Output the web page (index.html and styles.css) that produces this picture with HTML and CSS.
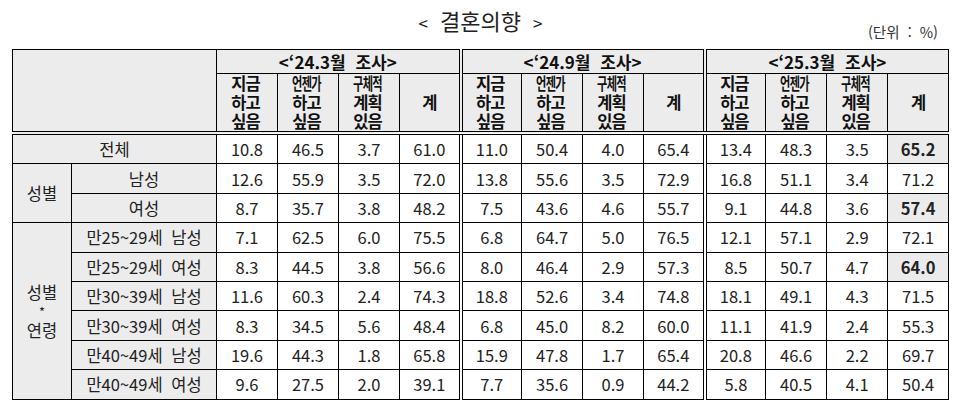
FILE: index.html
```html
<!DOCTYPE html>
<html lang="ko">
<head>
<meta charset="utf-8">
<title>결혼의향</title>
<link rel="stylesheet" href="styles.css">
</head>
<body>
<div class="page">
  <div class="head">
    <div class="title"><span class="br">&lt;</span>결혼의향<span class="br">&gt;</span></div>
    <div class="unit">(단위 <span class="colon">:</span> %)</div>
  </div>
  <table class="tbl">
    <colgroup>
      <col class="c1"><col class="c2">
      <col class="cd"><col class="cd"><col class="cd"><col class="cd">
      <col class="cd"><col class="cd"><col class="cd"><col class="cd">
      <col class="cd"><col class="cd"><col class="cd"><col class="cd">
    </colgroup>
    <thead>
      <tr class="r1">
        <th class="corner" rowspan="2" colspan="2"></th>
        <th class="grp" colspan="4">&lt;‘24.3월 조사&gt;</th>
        <th class="grp sep" colspan="4">&lt;‘24.9월 조사&gt;</th>
        <th class="grp sep" colspan="4">&lt;‘25.3월 조사&gt;</th>
      </tr>
      <tr class="r2">
        <th class="sub"><span class="ln">지금</span><span class="ln">하고</span><span class="ln">싶음</span></th>
        <th class="sub"><span class="ln sq">언젠가</span><span class="ln">하고</span><span class="ln">싶음</span></th>
        <th class="sub"><span class="ln sq">구체적</span><span class="ln">계획</span><span class="ln">있음</span></th>
        <th class="sub">계</th>
        <th class="sub sep"><span class="ln">지금</span><span class="ln">하고</span><span class="ln">싶음</span></th>
        <th class="sub"><span class="ln sq">언젠가</span><span class="ln">하고</span><span class="ln">싶음</span></th>
        <th class="sub"><span class="ln sq">구체적</span><span class="ln">계획</span><span class="ln">있음</span></th>
        <th class="sub">계</th>
        <th class="sub sep"><span class="ln">지금</span><span class="ln">하고</span><span class="ln">싶음</span></th>
        <th class="sub"><span class="ln sq">언젠가</span><span class="ln">하고</span><span class="ln">싶음</span></th>
        <th class="sub"><span class="ln sq">구체적</span><span class="ln">계획</span><span class="ln">있음</span></th>
        <th class="sub">계</th>
      </tr>
    </thead>
    <tbody>
      <tr>
        <td class="lab" colspan="2">전체</td>
        <td>10.8</td><td>46.5</td><td>3.7</td><td>61.0</td>
        <td class="sep">11.0</td><td>50.4</td><td>4.0</td><td>65.4</td>
        <td class="sep">13.4</td><td>48.3</td><td>3.5</td><td class="hl">65.2</td>
      </tr>
      <tr>
        <td class="lab" rowspan="2">성별</td>
        <td class="lab">남성</td>
        <td>12.6</td><td>55.9</td><td>3.5</td><td>72.0</td>
        <td class="sep">13.8</td><td>55.6</td><td>3.5</td><td>72.9</td>
        <td class="sep">16.8</td><td>51.1</td><td>3.4</td><td>71.2</td>
      </tr>
      <tr>
        <td class="lab">여성</td>
        <td>8.7</td><td>35.7</td><td>3.8</td><td>48.2</td>
        <td class="sep">7.5</td><td>43.6</td><td>4.6</td><td>55.7</td>
        <td class="sep">9.1</td><td>44.8</td><td>3.6</td><td class="hl">57.4</td>
      </tr>
      <tr>
        <td class="lab" rowspan="6"><span class="blk">성별</span><span class="blk star">*</span><span class="blk">연령</span></td>
        <td class="lab age">만25~29세 남성</td>
        <td>7.1</td><td>62.5</td><td>6.0</td><td>75.5</td>
        <td class="sep">6.8</td><td>64.7</td><td>5.0</td><td>76.5</td>
        <td class="sep">12.1</td><td>57.1</td><td>2.9</td><td>72.1</td>
      </tr>
      <tr>
        <td class="lab age">만25~29세 여성</td>
        <td>8.3</td><td>44.5</td><td>3.8</td><td>56.6</td>
        <td class="sep">8.0</td><td>46.4</td><td>2.9</td><td>57.3</td>
        <td class="sep">8.5</td><td>50.7</td><td>4.7</td><td class="hl">64.0</td>
      </tr>
      <tr>
        <td class="lab age">만30~39세 남성</td>
        <td>11.6</td><td>60.3</td><td>2.4</td><td>74.3</td>
        <td class="sep">18.8</td><td>52.6</td><td>3.4</td><td>74.8</td>
        <td class="sep">18.1</td><td>49.1</td><td>4.3</td><td>71.5</td>
      </tr>
      <tr>
        <td class="lab age">만30~39세 여성</td>
        <td>8.3</td><td>34.5</td><td>5.6</td><td>48.4</td>
        <td class="sep">6.8</td><td>45.0</td><td>8.2</td><td>60.0</td>
        <td class="sep">11.1</td><td>41.9</td><td>2.4</td><td>55.3</td>
      </tr>
      <tr>
        <td class="lab age">만40~49세 남성</td>
        <td>19.6</td><td>44.3</td><td>1.8</td><td>65.8</td>
        <td class="sep">15.9</td><td>47.8</td><td>1.7</td><td>65.4</td>
        <td class="sep">20.8</td><td>46.6</td><td>2.2</td><td>69.7</td>
      </tr>
      <tr>
        <td class="lab age">만40~49세 여성</td>
        <td>9.6</td><td>27.5</td><td>2.0</td><td>39.1</td>
        <td class="sep">7.7</td><td>35.6</td><td>0.9</td><td>44.2</td>
        <td class="sep">5.8</td><td>40.5</td><td>4.1</td><td>50.4</td>
      </tr>
    </tbody>
  </table>
</div>
</body>
</html>
```

FILE: styles.css
```css
html, body {
  margin: 0;
  padding: 0;
  background: #fff;
}
body {
  font-family: "Noto Sans CJK KR", "Noto Sans", sans-serif;
  color: #111;
}
.page {
  width: 937px;
  margin-left: 12px;
}
.head {
  height: 49px;
  display: grid;
  grid-template-areas: "all";
}
.title {
  grid-area: all;
  justify-self: center;
  align-self: start;
  margin-top: 5px;
  font-size: 22px;
  line-height: 30px;
  color: #222;
}
.title .br {
  font-size: 17px;
  margin: 0 12px;
}
.unit {
  grid-area: all;
  justify-self: end;
  align-self: end;
  margin-bottom: 8px;
  margin-right: 11px;
  font-size: 14.5px;
  line-height: 18px;
  color: #333;
}
.unit .colon {
  margin: 0 4px;
}
.tbl {
  border-collapse: collapse;
  table-layout: fixed;
  width: 937px;
}
.c1 { width: 59px; }
.c2 { width: 145px; }
.cd { width: 61px; }
.tbl th, .tbl td {
  border: 1px solid #000;
  padding: 0;
  text-align: center;
  vertical-align: middle;
}
.tbl th {
  background: #ececec;
  font-weight: 700;
  color: #111;
}
.r1 th { height: 23px; }
.grp {
  font-size: 17px;
  line-height: 20px;
  word-spacing: 5px;
}
.r2 th { height: 57px; }
.sub {
  font-size: 16.5px;
  line-height: 19px;
  letter-spacing: -1px;
}
.ln {
  display: block;
  height: 19px;
  margin-left: -3px;
}
.sq {
  transform: scaleX(0.68);
  letter-spacing: -1px;
}
.sub, .corner {
  border-bottom: 4px double #000 !important;
}
.sep {
  border-left: 4px double #000 !important;
}
.tbl td {
  height: 28.4px;
  font-size: 16.5px;
  line-height: 20px;
  color: #222;
}
.tbl td.lab {
  background: #ececec;
  font-size: 16.5px;
}
.tbl td.age {
  word-spacing: 4px;
}
.blk {
  display: block;
  line-height: 22px;
}
.star {
  font-size: 13px;
  line-height: 14px;
  padding-top: 2px;
}
.tbl td.hl {
  background: #ebebeb;
  font-weight: 700;
}
```
